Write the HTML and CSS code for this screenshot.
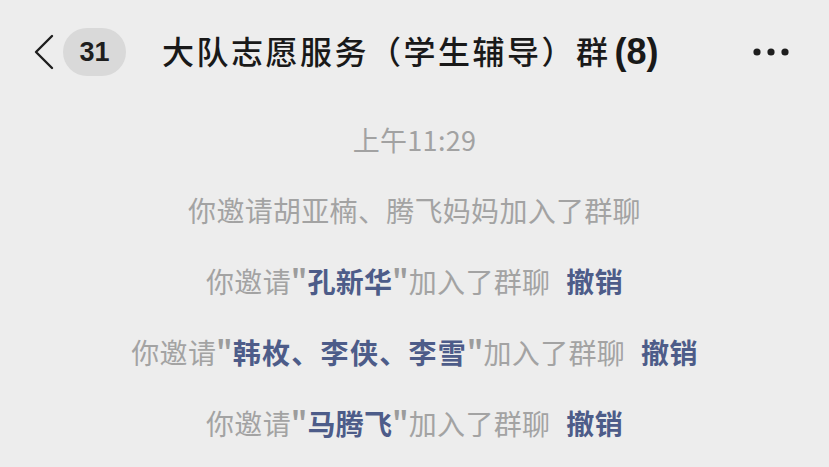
FILE: index.html
```html
<!DOCTYPE html>
<html lang="zh-CN">
<head>
<meta charset="utf-8">
<title>大队志愿服务（学生辅导）群(8)</title>
<link rel="stylesheet" href="styles.css">
</head>
<body>
<div class="app">
  <header class="nav">
    <svg class="back" width="22" height="36" viewBox="0 0 22 36" aria-hidden="true">
      <polyline points="19,2 3,18 19,34" fill="none" stroke="#1e1e1e" stroke-width="2.4" stroke-linecap="round" stroke-linejoin="round"/>
    </svg>
    <span class="badge">31</span>
    <h1 class="title">大队志愿服务（学生辅导）群<span class="count">(8)</span></h1>
    <svg class="more" width="36" height="8" viewBox="0 0 36 8" aria-hidden="true">
      <circle cx="4" cy="4" r="3.6" fill="#1e1e1e"/>
      <circle cx="18" cy="4" r="3.6" fill="#1e1e1e"/>
      <circle cx="32" cy="4" r="3.6" fill="#1e1e1e"/>
    </svg>
  </header>
  <main class="feed">
    <div class="row time">上午11:29</div>
    <div class="row">你邀请胡亚楠、腾飞妈妈加入了群聊</div>
    <div class="row">你邀请<span class="q">"</span><b class="name">孔新华</b><span class="q">"</span>加入了群聊<b class="undo">撤销</b></div>
    <div class="row">你邀请<span class="q">"</span><b class="name wide">韩枚、李侠、李雪</b><span class="q">"</span>加入了群聊<b class="undo">撤销</b></div>
    <div class="row">你邀请<span class="q">"</span><b class="name">马腾飞</b><span class="q">"</span>加入了群聊<b class="undo">撤销</b></div>
  </main>
</div>
</body>
</html>
```

FILE: styles.css
```css
* { box-sizing: border-box; }
html, body {
  margin: 0;
  padding: 0;
  background: #ededed;
}
body {
  width: 829px;
  height: 467px;
  overflow: hidden;
  font-family: "Noto Sans CJK SC", "Noto Sans", sans-serif;
}
.nav {
  height: 104px;
  display: flex;
  align-items: center;
  padding: 0 40px 0 33px;
}
.back {
  flex: none;
  display: block;
}
.badge {
  flex: none;
  margin-left: 8px;
  width: 63px;
  height: 48px;
  border-radius: 24px;
  background: #d9d9d9;
  color: #1e1e1e;
  font-family: "Liberation Sans", Arial, sans-serif;
  font-weight: 700;
  font-size: 27px;
  display: flex;
  align-items: center;
  justify-content: center;
}
.title {
  margin: 0 0 0 36px;
  font-size: 32px;
  font-weight: 500;
  color: #191919;
  letter-spacing: 2.5px;
  white-space: nowrap;
  line-height: 1;
  flex: 1;
}
.count {
  font-family: "Liberation Sans", Arial, sans-serif;
  font-size: 36px;
  font-weight: 700;
  letter-spacing: 0;
  margin-left: 4px;
}
.more {
  flex: none;
  display: block;
}
.feed {
  display: flex;
  flex-direction: column;
  align-items: center;
}
.row {
  height: 71px;
  line-height: 71px;
  font-size: 28px;
  color: #a3a3a3;
  white-space: nowrap;
  letter-spacing: 0.3px;
}
.row.time {
  font-size: 27px;
  color: #a2a2a2;
}
.q {
  color: #9c9c9c;
  font-weight: 700;
}
.name {
  color: #4d5c89;
  font-weight: 700;
}
.name.wide {
  letter-spacing: 1.3px;
}
.undo {
  color: #4d5c89;
  font-weight: 700;
  margin-left: 16px;
}
```
